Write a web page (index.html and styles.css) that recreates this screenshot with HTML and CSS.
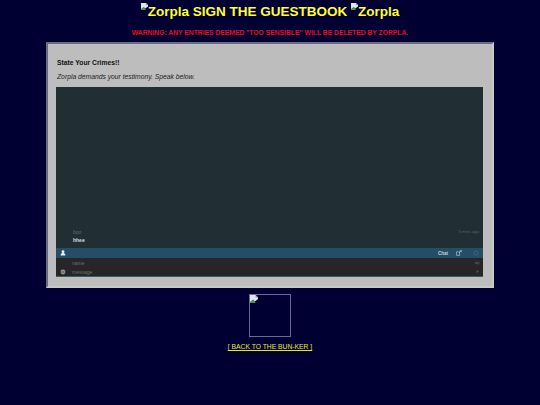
FILE: index.html
```html
<!DOCTYPE html>
<html lang="en">
<head>
<meta charset="utf-8">
<title>Sign the Guestbook</title>
<link rel="stylesheet" href="styles.css">
</head>
<body>
<h1 class="title">
  <svg class="broken" viewBox="0 0 10 10"><path d="M0 0h7l3 3v2L6 8 4 6 0 9z" fill="#dfe6ef"/><path d="M0 9l4-3 2 2 1 2H0z" fill="#4f9a4f"/><path d="M7 0l3 3H7z" fill="#8a97a8"/></svg>Zorpla SIGN THE GUESTBOOK
  <svg class="broken" viewBox="0 0 10 10"><path d="M0 0h7l3 3v2L6 8 4 6 0 9z" fill="#dfe6ef"/><path d="M0 9l4-3 2 2 1 2H0z" fill="#4f9a4f"/><path d="M7 0l3 3H7z" fill="#8a97a8"/></svg>Zorpla
</h1>
<p class="warning">WARNING: ANY ENTRIES DEEMED "TOO SENSIBLE" WILL BE DELETED BY ZORPLA.</p>
<main class="panel">
  <h2 class="panel-title">State Your Crimes!!</h2>
  <p class="panel-sub">Zorpla demands your testimony. Speak below.</p>
  <section class="chat">
    <div class="messages">
      <div class="msg">
        <div class="msg-text">
          <span class="msg-name">boo</span>
          <span class="msg-body">hhee</span>
        </div>
        <span class="msg-time">5 mins ago</span>
      </div>
    </div>
    <div class="bar">
      <svg class="bar-user" viewBox="0 0 10 10"><circle cx="5" cy="3" r="2.4" fill="#e8eef2"/><path d="M1 9c0-3 2-4 4-4s4 1 4 4z" fill="#e8eef2"/></svg>
      <span class="bar-chat">Chat</span>
      <svg class="bar-pop" viewBox="0 0 10 10"><path d="M1 3h5v6H1z" fill="none" stroke="#c5d3dc" stroke-width="1"/><path d="M5 5l4-4M6.500 1H9v2.500" fill="none" stroke="#c5d3dc" stroke-width="1"/></svg>
      <svg class="bar-dot" viewBox="0 0 10 10"><circle cx="5" cy="5" r="3.500" fill="none" stroke="#4a7288" stroke-width="1"/></svg>
    </div>
    <div class="form">
      <div class="form-row">
        <span class="form-icon"></span>
        <span class="form-text">name</span>
        <svg class="form-sound" viewBox="0 0 10 10"><path d="M1 4h2l3-2v6L3 6H1z" fill="#555"/><path d="M7 3.500v3M8.500 2.500v5" stroke="#555" stroke-width="1"/></svg>
      </div>
      <div class="form-row">
        <svg class="form-icon" viewBox="0 0 10 10"><circle cx="5" cy="5" r="4" fill="#9a9a9a"/><path d="M2.500 5h5" stroke="#262626" stroke-width="1.200"/></svg>
        <span class="form-text">message</span>
        <svg class="form-send" viewBox="0 0 10 10"><path d="M3 2l5 3-5 3z" fill="#555"/></svg>
      </div>
    </div>
  </section>
</main>
<div class="badge">
  <svg class="badge-broken" viewBox="0 0 10 10"><path d="M0 0h7l3 3v2L6 8 4 6 0 9z" fill="#dfe6ef"/><path d="M0 9l4-3 2 2 1 2H0z" fill="#4f9a4f"/><path d="M7 0l3 3H7z" fill="#8a97a8"/></svg>
</div>
<a class="back" href="#">[ BACK TO THE BUN-KER ]</a>
</body>
</html>
```
FILE: styles.css
```css
* { box-sizing: border-box; }
html, body { height: 100%; }
body {
  margin: 0;
  padding-top: 2px;
  background: #000033;
  font-family: "Liberation Sans", Arial, sans-serif;
  text-align: center;
  overflow: hidden;
}
.title {
  margin: 0;
  height: 21px;
  font-size: 13.500px;
  line-height: 20px;
  font-weight: bold;
  color: #ffff33;
}
.broken { width: 7px; height: 7px; vertical-align: 6px; }
.warning {
  margin: 5px 0 0;
  height: 14px;
  font-size: 6.750px;
  line-height: 10px;
  font-weight: bold;
  color: #e0101c;
}
.panel {
  width: 448px;
  height: 246px;
  margin: 0 auto;
  padding: 11px 9px 9px 8px;
  background: #bdbdbd;
  border: 2px solid;
  border-color: #6a6a80 #c8c8c8 #c8c8c8 #6a6a80;
  text-align: left;
  color: #111;
}
.panel-title { margin: 3px 0 0 1px; font-size: 6.750px; line-height: 9px; font-weight: bold; }
.panel-sub { margin: 5px 0 0 1px; font-size: 6.750px; line-height: 9px; font-style: italic; color: #222; }
.chat {
  margin-top: 6px;
  width: 427px;
  height: 190px;
  display: flex;
  flex-direction: column;
  background: #212f35;
}
.messages { flex: 1; display: flex; flex-direction: column; justify-content: flex-end; padding: 0 4px 5px 17px; }
.msg { display: flex; justify-content: space-between; align-items: flex-start; }
.msg-text { display: flex; flex-direction: column; gap: 2px; font-size: 5px; line-height: 6px; }
.msg-name { color: #5a6f78; }
.msg-body { color: #d5dde0; font-weight: bold; }
.msg-time { font-size: 4.200px; line-height: 6px; color: #55676f; }
.bar {
  height: 10px;
  display: flex;
  align-items: center;
  background: #254e66;
  padding: 0 4px 0 4px;
}
.bar-user { width: 6px; height: 6px; }
.bar-chat { margin-left: auto; font-size: 4.500px; font-weight: bold; color: #c5d3dc; }
.bar-pop { width: 6px; height: 6px; margin-left: 8px; }
.bar-dot { width: 6px; height: 6px; margin-left: 11px; }
.form { height: 19px; background: #262626; padding: 0 3px 0 4px; border-bottom: 1px solid #3d5a6c; }
.form-row { height: 9px; display: flex; align-items: center; }
.form-icon { width: 6px; height: 6px; flex: none; }
.form-text { margin-left: 6px; font-size: 5px; color: #6e6e6e; flex: 1; }
.form-sound { width: 6px; height: 6px; }
.form-send { width: 5px; height: 5px; }
.badge {
  width: 42px;
  height: 43px;
  margin: 6px auto 0;
  border: 1px solid #6a6a90;
  text-align: left;
  line-height: 0;
}
.badge-broken { width: 8px; height: 8px; }
.back {
  display: block;
  margin-top: 5px;
  font-size: 6.750px;
  line-height: 10px;
  color: #e8e820;
}
```
